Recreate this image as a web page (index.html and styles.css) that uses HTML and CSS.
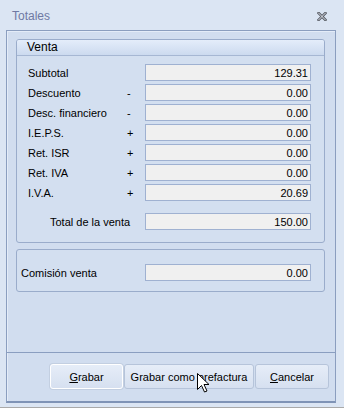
FILE: index.html
```html
<!DOCTYPE html>
<html lang="es">
<head>
    <meta charset="UTF-8">
    <title>Totales</title>
    <link rel="stylesheet" href="styles.css">
</head>
<body>
<div class="window">
    <div class="title-bar">
        <span class="title">Totales</span>
        <svg class="close-icon" width="10" height="9" viewBox="0 0 10 9">
            <path d="M1.5 1 L8.5 8 M8.5 1 L1.5 8" stroke="#555a63" stroke-width="2.6" stroke-linecap="square"/>
            <path d="M1.5 1 L8.5 8 M8.5 1 L1.5 8" stroke="#eef2f8" stroke-width="0.9" stroke-linecap="square"/>
        </svg>
    </div>

    <div class="panel">
        <div class="groups">
            <!-- Venta -->
            <div class="group group-venta">
                <div class="group-header">Venta</div>
                <div class="group-body">
                    <div class="row">
                        <span class="label">Subtotal</span>
                        <span class="sign"></span>
                        <span class="value">129.31</span>
                    </div>
                    <div class="row">
                        <span class="label">Descuento</span>
                        <span class="sign">-</span>
                        <span class="value">0.00</span>
                    </div>
                    <div class="row">
                        <span class="label">Desc. financiero</span>
                        <span class="sign">-</span>
                        <span class="value">0.00</span>
                    </div>
                    <div class="row">
                        <span class="label">I.E.P.S.</span>
                        <span class="sign">+</span>
                        <span class="value">0.00</span>
                    </div>
                    <div class="row">
                        <span class="label">Ret. ISR</span>
                        <span class="sign">+</span>
                        <span class="value">0.00</span>
                    </div>
                    <div class="row">
                        <span class="label">Ret. IVA</span>
                        <span class="sign">+</span>
                        <span class="value">0.00</span>
                    </div>
                    <div class="row">
                        <span class="label">I.V.A.</span>
                        <span class="sign">+</span>
                        <span class="value">20.69</span>
                    </div>
                    <div class="row row-total">
                        <span class="label">Total de la venta</span>
                        <span class="value">150.00</span>
                    </div>
                </div>
            </div>

            <!-- Comision -->
            <div class="group group-comision">
                <div class="row row-comision">
                    <span class="label">Comisión venta</span>
                    <span class="value">0.00</span>
                </div>
            </div>
        </div>

        <div class="footer">
            <button class="btn btn-default"><u>G</u>rabar</button>
            <button class="btn btn-wide">Grabar como prefactura</button>
            <button class="btn"><u>C</u>ancelar</button>
            <svg class="cursor" width="13" height="20" viewBox="0 0 13 20">
                <path d="M0.5 0.5 L0.5 16.5 L4.5 12.5 L7.5 19 L10 18 L7 11.5 L12 11.5 Z" fill="#fff" stroke="#000" stroke-width="1" stroke-linejoin="miter"/>
            </svg>
        </div>
    </div>
</div>
</body>
</html>
```

FILE: styles.css
```css
/* General */
body {
    margin: 0;
    padding: 0;
    font-family: 'Liberation Sans', Arial, sans-serif;
    font-size: 11px;
    color: #000;
    background-color: #dbe5f3;
}

.window {
    width: 344px;
    height: 408px;
    background-color: #dbe5f3;
    border-bottom: 1px solid #a9a9a9;
    box-sizing: border-box;
    overflow: hidden;
}

/* Title bar */
.title-bar {
    height: 30px;
    display: flex;
    align-items: center;
    justify-content: space-between;
    padding: 2px 17px 0 12px;
    box-sizing: border-box;
}

.title {
    font-size: 12px;
    color: #6f79a3;
}

/* Main panel */
.panel {
    margin-left: 6px;
    width: 330px;
    height: 373px;
    box-sizing: border-box;
    background-color: #d1ddef;
    border: 1px solid #8b9ebf;
    border-bottom: 2px solid #7f93b6;
    box-shadow: inset 1px 1px 0 #e4ecf8;
    display: flex;
    flex-direction: column;
}

.groups {
    flex: 1;
    padding: 8px 10px 0 9px;
}

/* Group boxes */
.group {
    width: 309px;
    box-sizing: border-box;
    border: 1px solid #9aaccb;
    border-radius: 3px;
    background-color: #d3dff0;
}

.group-venta {
    height: 204px;
}

.group-header {
    height: 15px;
    line-height: 15px;
    padding-left: 10px;
    font-size: 12px;
    border-bottom: 1px solid #a6b7d3;
    background: linear-gradient(#e4edfa, #ccdaef);
    border-radius: 2px 2px 0 0;
}

.group-body {
    padding: 8px 0 0 11px;
    display: flex;
    flex-direction: column;
    gap: 3px;
}

.row {
    display: grid;
    grid-template-columns: 98px 19px 166px;
    align-items: center;
    height: 17px;
}

.label {
    white-space: nowrap;
}

.sign {
    padding-left: 1px;
}

.value {
    height: 17px;
    line-height: 17px;
    box-sizing: border-box;
    border: 1px solid #9fb1d1;
    background-color: #f0f0f0;
    text-align: right;
    padding-right: 2px;
}

.row-total {
    grid-template-columns: 117px 166px;
    margin-top: 9px;
}

.row-total .label {
    padding-left: 22px;
}

.group-comision {
    margin-top: 6px;
    height: 43px;
    padding: 14px 0 0 4px;
}

.row-comision {
    grid-template-columns: 124px 166px;
}

/* Buttons */
.footer {
    position: relative;
    height: 49px;
    border-top: 1px solid #8a9ec0;
    box-sizing: border-box;
    display: flex;
    justify-content: flex-end;
    align-items: flex-start;
    gap: 1px;
    padding: 11px 6px 0 0;
}

.btn {
    height: 25px;
    font-family: 'Liberation Sans', Arial, sans-serif;
    font-size: 11px;
    color: #000;
    border: 1px solid #b6c4da;
    border-radius: 3px;
    background: linear-gradient(#e6edf8, #d6e0f0);
    padding: 0;
    width: 74px;
}

.btn-default {
    width: 73px;
    border-color: #ffffff;
    box-shadow: 0 0 0 1px #c3cfe1;
}

.btn-wide {
    width: 130px;
}

.cursor {
    position: absolute;
    left: 190px;
    top: 20px;
}
```
